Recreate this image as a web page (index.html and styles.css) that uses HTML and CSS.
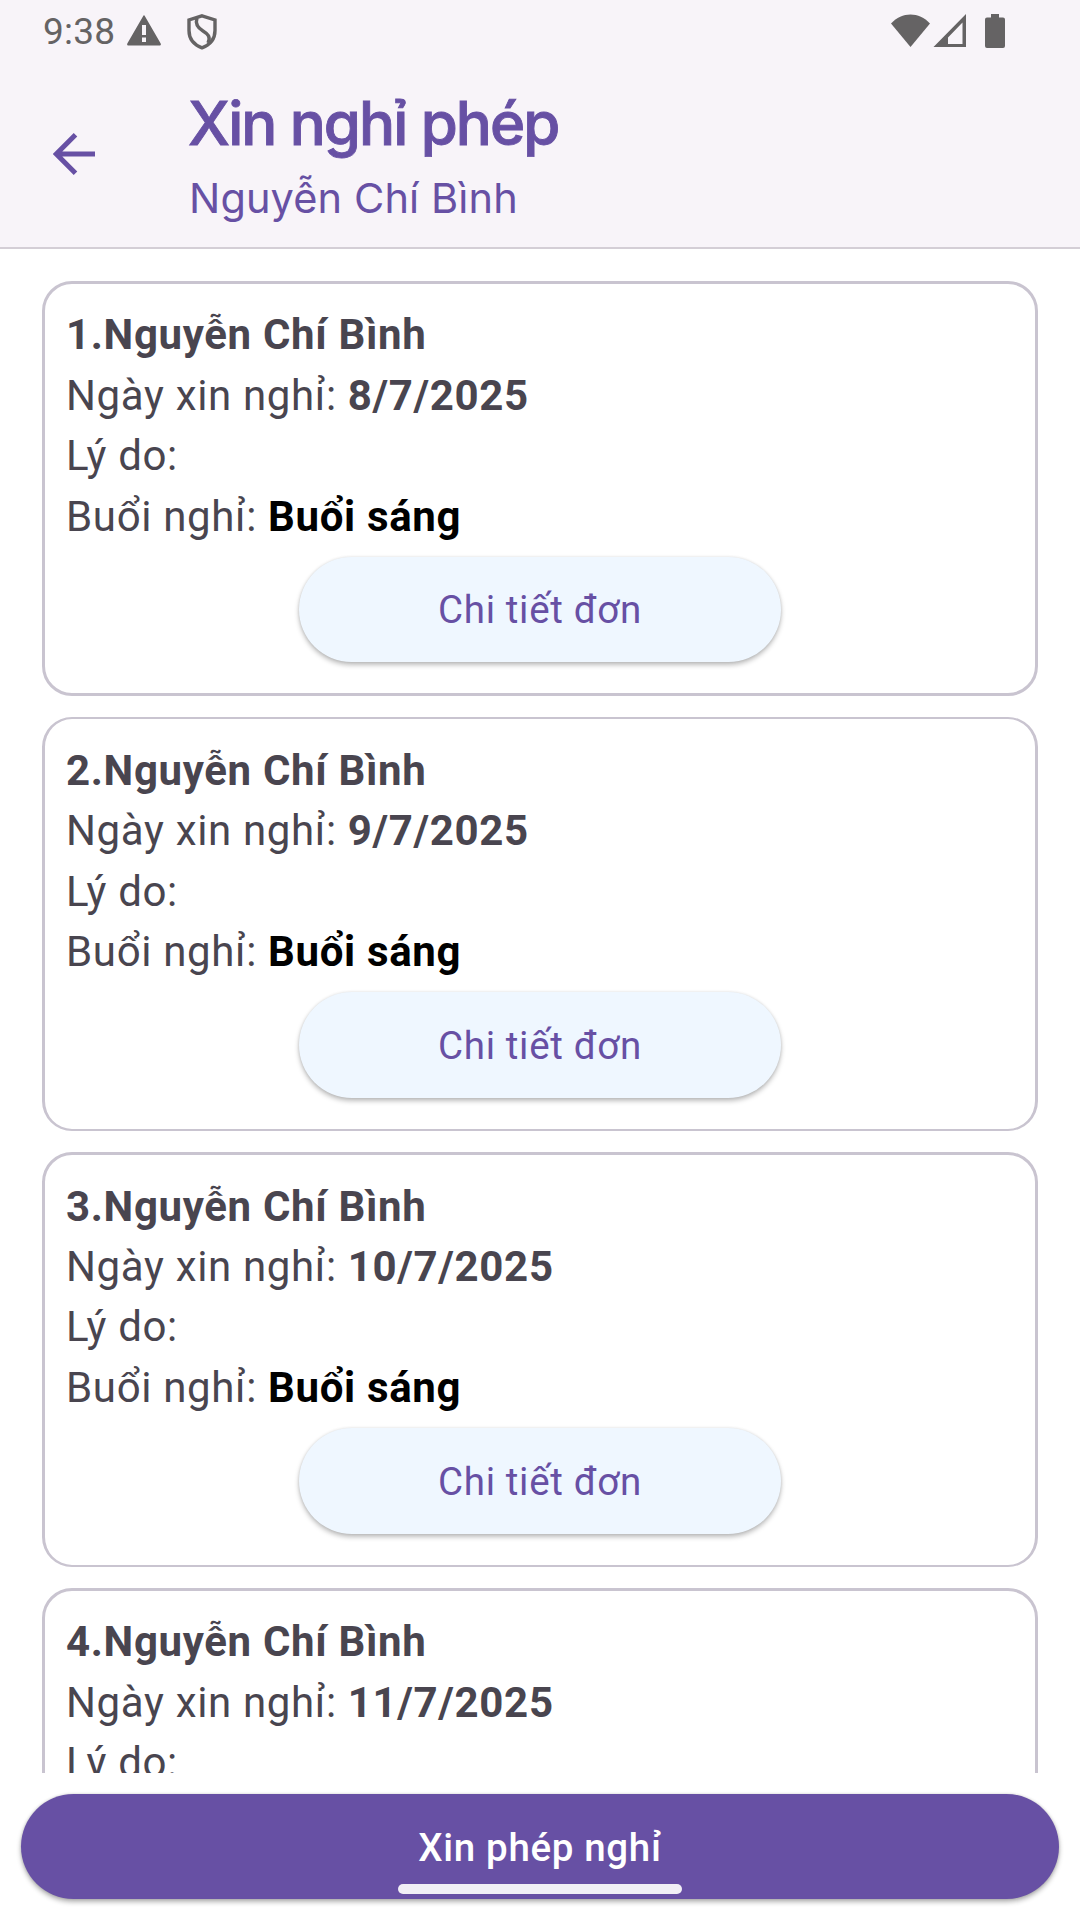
FILE: index.html
```html
<!DOCTYPE html>
<html lang="vi">
<head>
<meta charset="utf-8">
<title>Xin nghỉ phép</title>
<link rel="stylesheet" href="styles.css">
</head>
<body>
<div class="screen">
  <header class="top">
    <div class="status">
      <span class="clock">9:38</span>
      <svg class="warn" width="36" height="32" viewBox="0 0 36 32"><path fill="#656364" fill-rule="evenodd" d="M17.500 0.500Q18 0 18.500 0.500L34.700 28.500Q35.400 30.500 34 30.500H2Q.6 30.500 1.300 28.500ZM16 10v10h4V10zM16 22.500v4.500h4v-4.500z"/></svg>
      <svg class="shield" width="32" height="36" viewBox="0 0 32 36" fill="none" stroke="#656364" stroke-width="3.400"><path d="M16 1.800 29 6v10.500C29 25 23.500 31 16 33.800 8.500 31 3 25 3 16.500V6Z"/><path d="M11 4C9 10 12 14 17 17S25 23 22 29"/></svg>
      <svg class="radio" width="120" height="36" viewBox="0 0 120 36" fill="#656364"><path d="M1 9.500C12-2.500 29-2.500 40 9.500L20.500 33Z"/><path fill-rule="evenodd" d="M76 0V33H43.500ZM72.500 8.500 58 23.500v6.500h14.500z"/><path d="M101 0h8v3.500h4q2 0 2 2V32q0 2-2 2H97q-2 0-2-2V5.500q0-2 2-2h4z"/></svg>
    </div>
    <div class="bar">
      <svg class="back" width="42" height="42" viewBox="0 0 42 42" fill="none" stroke="#6750a4" stroke-width="5"><path d="M42 21H3M22.500 1.800 3.300 21 22.500 40.200"/></svg>
      <div class="titles">
        <h1>Xin nghỉ phép</h1>
        <p>Nguyễn Chí Bình</p>
      </div>
    </div>
  </header>
  <main class="list">
    <section class="card">
      <p><b>1.Nguyễn Chí Bình</b></p>
      <p>Ngày xin nghỉ: <b>8/7/2025</b></p>
      <p>Lý do:</p>
      <p>Buổi nghỉ: <b class="shift">Buổi sáng</b></p>
      <button class="detail">Chi tiết đơn</button>
    </section>
    <section class="card">
      <p><b>2.Nguyễn Chí Bình</b></p>
      <p>Ngày xin nghỉ: <b>9/7/2025</b></p>
      <p>Lý do:</p>
      <p>Buổi nghỉ: <b class="shift">Buổi sáng</b></p>
      <button class="detail">Chi tiết đơn</button>
    </section>
    <section class="card">
      <p><b>3.Nguyễn Chí Bình</b></p>
      <p>Ngày xin nghỉ: <b>10/7/2025</b></p>
      <p>Lý do:</p>
      <p>Buổi nghỉ: <b class="shift">Buổi sáng</b></p>
      <button class="detail">Chi tiết đơn</button>
    </section>
    <section class="card">
      <p><b>4.Nguyễn Chí Bình</b></p>
      <p>Ngày xin nghỉ: <b>11/7/2025</b></p>
      <p>Lý do:</p>
    </section>
  </main>
  <footer class="foot">
    <button class="submit">Xin phép nghỉ</button>
    <div class="home"></div>
  </footer>
</div>
</body>
</html>
```
FILE: styles.css
```css
* { box-sizing: border-box; }
body { margin: 0; background: #fff; font-family: Roboto, "Noto Sans", sans-serif; }
h1, p { margin: 0; white-space: nowrap; }
button { border: 0; font: inherit; padding: 0; }

.screen { width: 1080px; height: 1920px; display: flex; flex-direction: column; overflow: hidden; }

.top { height: 249px; flex: none; background: #f8f4f9; border-bottom: 2px solid #d4ced6; color: #6750a4; }
.status { height: 63px; display: flex; align-items: flex-start; padding: 14px 70px 0 43px; color: #656364; }
.clock { font-size: 37px; line-height: 36px; width: 83px; letter-spacing: .2px; }
.warn { margin-top: 1px; }
.shield { margin-left: 24px; }
.radio { margin-left: auto; }

.bar { display: flex; height: 184px; }
.back { margin: 70px 0 0 53px; flex: none; }
.titles { margin-left: 93px; padding-top: 22px; }
.titles h1 { font: 500 60px/76px Inter, sans-serif; letter-spacing: -1.900px; -webkit-text-stroke: .9px #6750a4; }
.titles p { font: 370 41.500px/74px Inter, sans-serif; letter-spacing: .12px; padding-left: 1px; }

.list { height: 1524px; flex: none; overflow: hidden; padding: 32px 42px 0; display: flex; flex-direction: column; gap: 21px; }
.card { height: 414.600px; flex: none; border: 3px solid #c9c4d0; border-radius: 30px; background: #fff; padding: 21.400px 21px 0; font-size: 42px; line-height: 60.375px; letter-spacing: .660px; color: #49454f; }
.card:nth-child(2) { border-top-width: 2px; padding-top: 22.400px; }
.card:nth-child(2), .card:nth-child(3) { border-bottom-width: 2px; }
.card b { font-weight: 700; }
.card .shift { color: #000; }
.detail { display: block; width: 482px; height: 105.500px; margin: 10px auto 0; padding-top: 2px; border-radius: 53px; background: #eff7ff; color: #6750a4; font-size: 38.500px; letter-spacing: .660px; box-shadow: 0 3px 5px rgba(0, 0, 0, .26), 0 0 3px rgba(0, 0, 0, .1); }

.foot { flex: 1; padding: 21px 21px 0; position: relative; }
.submit { display: block; width: 100%; height: 105px; padding-top: 2px; border-radius: 53px; background: #6750a4; color: #fff; font-size: 38.500px; font-weight: 500; letter-spacing: .660px; box-shadow: 0 3px 5px rgba(0, 0, 0, .3), 0 0 3px rgba(0, 0, 0, .15); }
.home { position: absolute; left: 398px; top: 111px; width: 284px; height: 10px; border-radius: 5px; background: #f1eff6; }
```
